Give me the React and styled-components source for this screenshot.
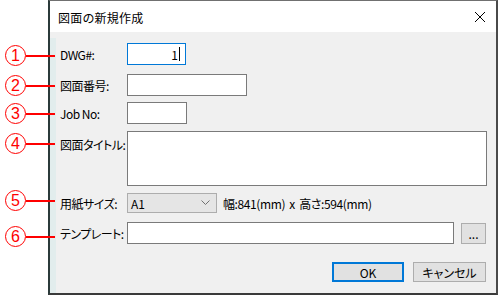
import React from "react";
import styled, { createGlobalStyle } from "styled-components";

const GlobalStyle = createGlobalStyle`
  html, body {
    margin: 0;
    padding: 0;
    background: #fff;
  }
  body {
    font-family: "Noto Sans CJK JP", "Liberation Sans", sans-serif;
    font-size: 12px;
    color: #000;
  }
`;

const Page = styled.div`
  position: relative;
  width: 499px;
  height: 295px;
  overflow: hidden;
  background: #fff;
`;

const Window = styled.div`
  margin-left: 48px;
  width: 450px;
  height: 295px;
  box-sizing: border-box;
  display: flex;
  flex-direction: column;
  border-top: 1px solid #707070;
  border-left: 2px solid #2b3a3a;
  border-right: 2px solid #4a4a4a;
  border-bottom: 2px solid #3a3a3a;
  background: #f0f0f0;
`;

const TitleBar = styled.div`
  height: 31px;
  flex: none;
  display: flex;
  align-items: center;
  justify-content: space-between;
  background: #fff;
  padding: 0 8px 0 8px;
`;

const Title = styled.span`
  font-size: 12px;
  font-feature-settings: "palt";
  letter-spacing: 0.3px;
  padding-top: 1px;
`;

const CloseBtn = styled.span`
  display: flex;
  width: 12px;
  height: 12px;
  margin-right: 2px;
`;

const Body = styled.div`
  flex: 1;
  display: flex;
`;

const Strip = styled.div`
  width: 6px;
  flex: none;
  margin-top: 6px;
  background: #e2eded;
`;

const Content = styled.div`
  flex: 1;
  display: flex;
  flex-direction: column;
  padding: 0 9px 0 4px;
`;

const Row = styled.div`
  display: flex;
  align-items: ${(p) => (p.$top ? "flex-start" : "center")};
  margin-top: ${(p) => p.$mt}px;
`;

const Label = styled.span`
  width: 67px;
  flex: none;
  font-feature-settings: "palt";
  letter-spacing: -0.5px;
  white-space: nowrap;
  padding-top: ${(p) => p.$pt || 0}px;
`;

const Field = styled.div`
  box-sizing: border-box;
  width: ${(p) => (p.$w ? `${p.$w}px` : "auto")};
  flex: ${(p) => (p.$w ? "none" : "1")};
  height: ${(p) => p.$h || 22}px;
  background: #fff;
  border: 1px solid ${(p) => (p.$focus ? "#0078d7" : "#7a7a7a")};
  display: flex;
  align-items: center;
  justify-content: flex-end;
  padding-right: 5px;
`;

const Caret = styled.span`
  display: inline-block;
  width: 1px;
  height: 14px;
  background: #000;
  margin-left: 1px;
`;

const Select = styled.div`
  box-sizing: border-box;
  width: 90px;
  height: 20px;
  flex: none;
  background: #e5e5e5;
  border: 1px solid #adadad;
  display: flex;
  align-items: center;
  justify-content: space-between;
  padding: 0 6px 0 3px;
`;

const Dim = styled.span`
  margin-left: 6px;
  font-feature-settings: "palt";
  letter-spacing: -0.4px;
  word-spacing: 2px;
  white-space: nowrap;
`;

const Button = styled.div`
  box-sizing: border-box;
  width: ${(p) => p.$w}px;
  height: ${(p) => p.$h || 20}px;
  flex: none;
  background: #e1e1e1;
  border: ${(p) => (p.$default ? "2px solid #0078d7" : "1px solid #adadad")};
  display: flex;
  align-items: center;
  justify-content: center;
  font-feature-settings: "palt";
`;

const ButtonRow = styled.div`
  display: flex;
  justify-content: flex-end;
  gap: 9px;
  margin-top: 18px;
  padding-right: 1px;
`;

const Marker = styled.div`
  position: absolute;
  left: 5px;
  top: ${(p) => p.$y - 10}px;
  display: flex;
  align-items: center;
`;

const Circle = styled.span`
  box-sizing: border-box;
  width: 21px;
  height: 21px;
  border: 1px solid #ff0000;
  border-radius: 50%;
  color: #ff0000;
  display: flex;
  align-items: center;
  justify-content: center;
  font-family: "Liberation Sans", sans-serif;
  font-size: 16px;
  line-height: 1;
`;

const Leader = styled.span`
  width: 29px;
  height: 2px;
  background: #ff0000;
`;

const markers = [
  { n: 1, y: 55 },
  { n: 2, y: 85 },
  { n: 3, y: 113 },
  { n: 4, y: 143 },
  { n: 5, y: 200 },
  { n: 6, y: 236 },
];

export default function App() {
  return (
    <Page>
      <GlobalStyle />
      <Window>
        <TitleBar>
          <Title>図面の新規作成</Title>
          <CloseBtn>
            <svg width="12" height="12" viewBox="0 0 12 12">
              <path d="M1 1 L11 11 M11 1 L1 11" stroke="#000" strokeWidth="1" />
            </svg>
          </CloseBtn>
        </TitleBar>
        <Body>
          <Strip />
          <Content>
            <Row $mt={11}>
              <Label>DWG#:</Label>
              <Field $w={59} $focus>
                1<Caret />
              </Field>
            </Row>
            <Row $mt={9}>
              <Label>図面番号:</Label>
              <Field $w={120} />
            </Row>
            <Row $mt={6}>
              <Label>Job No:</Label>
              <Field $w={60} />
            </Row>
            <Row $mt={7} $top>
              <Label $pt={5}>図面タイトル:</Label>
              <Field $h={55} />
            </Row>
            <Row $mt={7}>
              <Label>用紙サイズ:</Label>
              <Select>
                <span>A1</span>
                <svg width="9" height="6" viewBox="0 0 9 6">
                  <path d="M0.5 0.5 L4.5 4.5 L8.5 0.5" stroke="#707070" strokeWidth="1" fill="none" />
                </svg>
              </Select>
              <Dim>幅:841(mm) x 高さ:594(mm)</Dim>
            </Row>
            <Row $mt={9}>
              <Label>テンプレート:</Label>
              <Field />
              <Button $w={25} $h={21} style={{ marginLeft: 7, marginRight: 1 }}>
                ...
              </Button>
            </Row>
            <ButtonRow>
              <Button $w={72} $default>
                OK
              </Button>
              <Button $w={73}>キャンセル</Button>
            </ButtonRow>
          </Content>
        </Body>
      </Window>
      {markers.map((m) => (
        <Marker key={m.n} $y={m.y}>
          <Circle>{m.n}</Circle>
          <Leader />
        </Marker>
      ))}
    </Page>
  );
}
